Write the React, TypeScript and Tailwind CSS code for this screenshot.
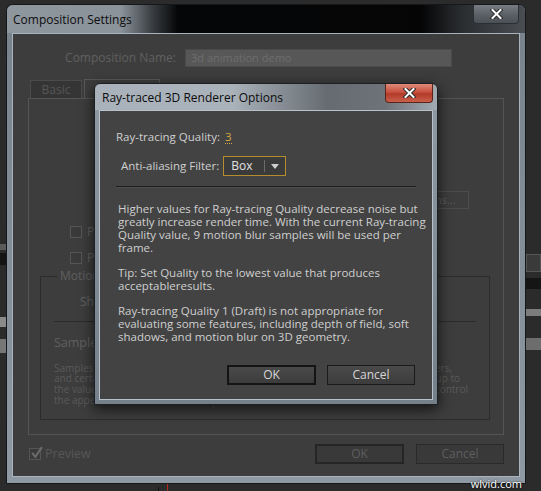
import React from "react";

function DimButton({ label, strong }: { label: string; strong?: boolean }) {
  return (
    <div
      className={
        "flex h-[20px] items-center justify-center bg-[#393939] text-[12px] text-[#5e5e5e] " +
        (strong ? "border-2 border-[#252525]" : "border border-[#2a2a2a]")
      }
    >
      {label}
    </div>
  );
}

function Button({ label, strong }: { label: string; strong?: boolean }) {
  return (
    <div
      className={
        "flex h-[20px] items-center justify-center bg-gradient-to-b from-[#4a4a4a] to-[#3c3c3c] text-[12px] text-[#d6d6d6] " +
        (strong ? "border-2 border-[#141414]" : "border border-[#1a1a1a]")
      }
    >
      {label}
    </div>
  );
}

function DimCheck({ checked }: { checked?: boolean }) {
  return (
    <div className="relative h-[12px] w-[12px] shrink-0 border border-[#555555] bg-[#3a3a3a]">
      {checked && (
        <svg viewBox="0 0 12 12" className="absolute -top-[3px] left-[0px] h-[13px] w-[13px]">
          <path d="M2 6.5 L5 10 L11 1" fill="none" stroke="#6a6a6a" strokeWidth="2" />
        </svg>
      )}
    </div>
  );
}

function CloseX({ className }: { className?: string }) {
  return (
    <svg viewBox="0 0 12 10" className={className}>
      <path d="M2 1 L10 9 M10 1 L2 9" stroke="#2a2a2a" strokeWidth="4" strokeLinecap="square" />
      <path d="M2 1 L10 9 M10 1 L2 9" stroke="#ffffff" strokeWidth="2" strokeLinecap="square" />
    </svg>
  );
}

function RayTracedDialog() {
  return (
    <div className="absolute left-[94px] top-[83px] flex h-[322px] w-[344px] flex-col rounded-t-[6px] border border-[#1c2024] bg-[linear-gradient(to_right,#a9b2bb,#aab2ba_40%,#656b71_68%,#6d7379_85%,#a2aab2)] shadow-[0_4px_14px_rgba(0,0,0,0.7)]">
      <div className="flex h-[26px] shrink-0 items-start justify-between pl-[7px] pr-[4px]">
        <div className="pt-[5px] text-[12px] text-[#0c0c0c]">Ray-traced 3D Renderer Options</div>
        <div className="flex h-[19px] w-[48px] items-center justify-center rounded-b-[4px] border border-t-0 border-[#5b2418] bg-[linear-gradient(to_bottom,#e08a7a,#c8513f_45%,#b23a28_55%,#c9604c)]">
          <CloseX className="h-[10px] w-[13px]" />
        </div>
      </div>
      <div className="flex flex-1 bg-[linear-gradient(to_bottom,#8e98a2,#76808a)] px-[4px] pb-[4px]">
        <div className="flex flex-1 flex-col border border-[#b7c1cb] bg-[#434343] text-[11.5px] text-[#cfcfcf]">
          <div className="mt-[18px] flex h-[16px] items-center pl-[16px]">
            <span>Ray-tracing Quality:</span>
            <span className="ml-[5px] border-b border-dotted border-[#d6a641] leading-[13px] text-[#d6a641]">3</span>
          </div>
          <div className="mt-[11px] flex h-[20px] items-center pl-[21px]">
            <span>Anti-aliasing Filter:</span>
            <div className="ml-[4px] flex h-[20px] w-[63px] items-center border border-[#b48d2f] bg-[#3b3b3b]">
              <span className="flex-1 pl-[7px] text-[12px] text-[#e2e2e2]">Box</span>
              <div className="h-[12px] w-px bg-[#6a6a6a]" />
              <svg viewBox="0 0 8 5" className="mx-[6px] h-[5px] w-[8px]">
                <path d="M0 0 L8 0 L4 5 Z" fill="#cfcfcf" />
              </svg>
            </div>
          </div>
          <div className="ml-[16px] mt-[10px] h-[2px] w-[300px] border-b border-t border-b-[#4f4f4f] border-t-[#1c1c1c]" />
          <div className="ml-[18px] mt-[14px] whitespace-nowrap leading-[13px]">
            <div>Higher values for Ray-tracing Quality decrease noise but</div>
            <div>greatly increase render time. With the current Ray-tracing</div>
            <div>Quality value, 9 motion blur samples will be used per</div>
            <div>frame.</div>
            <div className="mt-[12px]">Tip: Set Quality to the lowest value that produces</div>
            <div>acceptableresults.</div>
            <div className="mt-[12px]">Ray-tracing Quality 1 (Draft) is not appropriate for</div>
            <div>evaluating some features, including depth of field, soft</div>
            <div>shadows, and motion blur on 3D geometry.</div>
          </div>
          <div className="mt-[22px] flex gap-[11px] pl-[127px]">
            <div className="w-[89px]">
              <Button label="OK" strong />
            </div>
            <div className="w-[88px]">
              <Button label="Cancel" />
            </div>
          </div>
        </div>
      </div>
    </div>
  );
}

export default function App() {
  return (
    <div className="relative flex h-[491px] w-[541px] overflow-hidden bg-[#2b2b2b] font-['Open_Sans',sans-serif]">
      {/* left edge of the app behind */}
      <div className="flex w-[6px] shrink-0 flex-col">
        <div className="mt-[244px] h-[6px] bg-[#5a5a5a]" />
        <div className="mt-[3px] h-[12px] bg-[#141414]" />
        <div className="mt-[52px] h-[10px] bg-[#8a8a8a]" />
        <div className="mt-[12px] h-[14px] bg-[#777777]" />
      </div>

      {/* Composition Settings window */}
      <div className="flex w-[520px] shrink-0 flex-col pt-[4px]">
        <div className="flex h-[480px] flex-col rounded-t-[7px] border border-[#15181b] bg-[#6f7882]">
          <div className="flex h-[28px] shrink-0 items-start justify-between rounded-t-[6px] bg-[linear-gradient(to_right,#8e969e,#8a929a_22%,#3a3e42_28%,#050607_33%,#050506_80%,#2b2e31_88%,#4a4e52)] pl-[6px] pr-[6px]">
            <div className="pt-[6px] text-[12px] text-[#0d0d0d]">Composition Settings</div>
            <div className="flex h-[19px] w-[46px] items-center justify-center rounded-b-[4px] border border-t-0 border-[#2b2f33] bg-[linear-gradient(to_bottom,#777d83,#5c6268_50%,#4a5055)]">
              <CloseX className="h-[10px] w-[13px]" />
            </div>
          </div>
          <div className="flex flex-1 bg-[linear-gradient(to_bottom,#79838d,#8f99a3)] px-[5px] pb-[6px]">
            <div className="flex flex-1 flex-col border border-[#a9b3bd] bg-[#3d3d3d] text-[#606060]">
              {/* name row */}
              <div className="mt-[15px] flex h-[18px] items-center">
                <div className="w-[163px] text-right text-[12px]">Composition Name:</div>
                <div className="ml-[9px] flex h-[18px] w-[267px] items-center border border-[#4a4a4a] bg-[#575757] pl-[5px] text-[11px] text-[#6e6e6e]">
                  3d animation demo
                </div>
              </div>
              {/* tabs */}
              <div className="ml-[17px] mt-[12px] flex items-end">
                <div className="flex h-[18px] w-[52px] items-center justify-center border border-b-0 border-[#4b4b4b] bg-[#353535] text-[12px] text-[#555555]">
                  Basic
                </div>
                <div className="ml-[2px] flex h-[19px] w-[76px] items-center justify-center border border-b-0 border-[#575757] text-[12px]">
                  Advanced
                </div>
              </div>
              {/* tab panel */}
              <div className="ml-[15px] flex h-[337px] w-[476px] flex-col border border-[#545454]">
                <div className="mt-[92px] flex justify-end pr-[34px]">
                  <div className="flex h-[18px] w-[76px] items-center justify-center border border-[#4c4c4c] text-[11px] text-[#5c5c5c]">
                    Options...
                  </div>
                </div>
                <div className="ml-[41px] mt-[14px] flex items-center gap-[5px] text-[12px]">
                  <DimCheck />
                  <span>Preserve frame rate when nested or in render queue</span>
                </div>
                <div className="ml-[41px] mt-[8px] flex items-center gap-[5px] text-[12px]">
                  <DimCheck />
                  <span>Preserve resolution when nested</span>
                </div>
                <fieldset className="ml-[11px] mt-0 h-[153px] w-[450px] border border-[#2c2c2c] px-[13px]">
                  <legend className="ml-[3px] px-[3px] text-[12px] text-[#5f5f5f]">Motion Blur</legend>
                  <div className="ml-[26px] mt-[8px] text-[12px]">Shutter Angle:</div>
                  <div className="mt-[10px] h-px w-[422px] bg-[#2a2a2a]" />
                  <div className="mt-[12px] text-[12.5px]">Samples Per Frame:</div>
                  <div className="mt-[10px] whitespace-nowrap text-[10px] leading-[10.7px] text-[#5a5a5a]">
                    <div className="flex w-[398px] justify-between">
                      <span>Samples Per Frame is the minimum</span>
                      <span>for 3D layers, shape layers,</span>
                    </div>
                    <div className="flex w-[406px] justify-between">
                      <span>and certain effects. Adaptive</span>
                      <span>is the maximum, up to</span>
                    </div>
                    <div className="flex w-[414px] justify-between">
                      <span>the value set here. Motion</span>
                      <span>in the Timeline control</span>
                    </div>
                    <div>the appearance of blur for each layer.</div>
                  </div>
                </fieldset>
              </div>
              {/* bottom row */}
              <div className="mt-[9px] flex h-[20px] items-center">
                <div className="ml-[16px] flex items-center gap-[4px] text-[12.5px] text-[#575757]">
                  <DimCheck checked />
                  <span>Preview</span>
                </div>
                <div className="ml-auto mr-[15px] flex gap-[12px]">
                  <div className="w-[89px]">
                    <DimButton label="OK" strong />
                  </div>
                  <div className="w-[88px]">
                    <DimButton label="Cancel" />
                  </div>
                </div>
              </div>
            </div>
          </div>
        </div>
        <div className="flex h-[7px]">
          <div className="ml-[152px] mt-[3px] w-px bg-[#111111]" />
          <div className="ml-[8px] w-px bg-[#b0281e]" />
          <div className="ml-auto mr-[4px] -mt-[6px] text-[11px] leading-[11px] text-white [text-shadow:0_0_2px_#000]">
            wlvid.com
          </div>
        </div>
      </div>

      {/* right edge of the app behind */}
      <div className="flex w-[15px] shrink-0 flex-col">
        <div className="mt-[254px] h-[18px] border border-[#555555] bg-[#3a3a3a]" />
        <div className="mt-[6px] h-[11px] bg-[#151515]" />
        <div className="mt-[20px] h-[7px] bg-[#7c7c7c]" />
        <div className="mt-[22px] h-[12px] bg-[#6d6d6d]" />
      </div>

      <RayTracedDialog />
    </div>
  );
}
